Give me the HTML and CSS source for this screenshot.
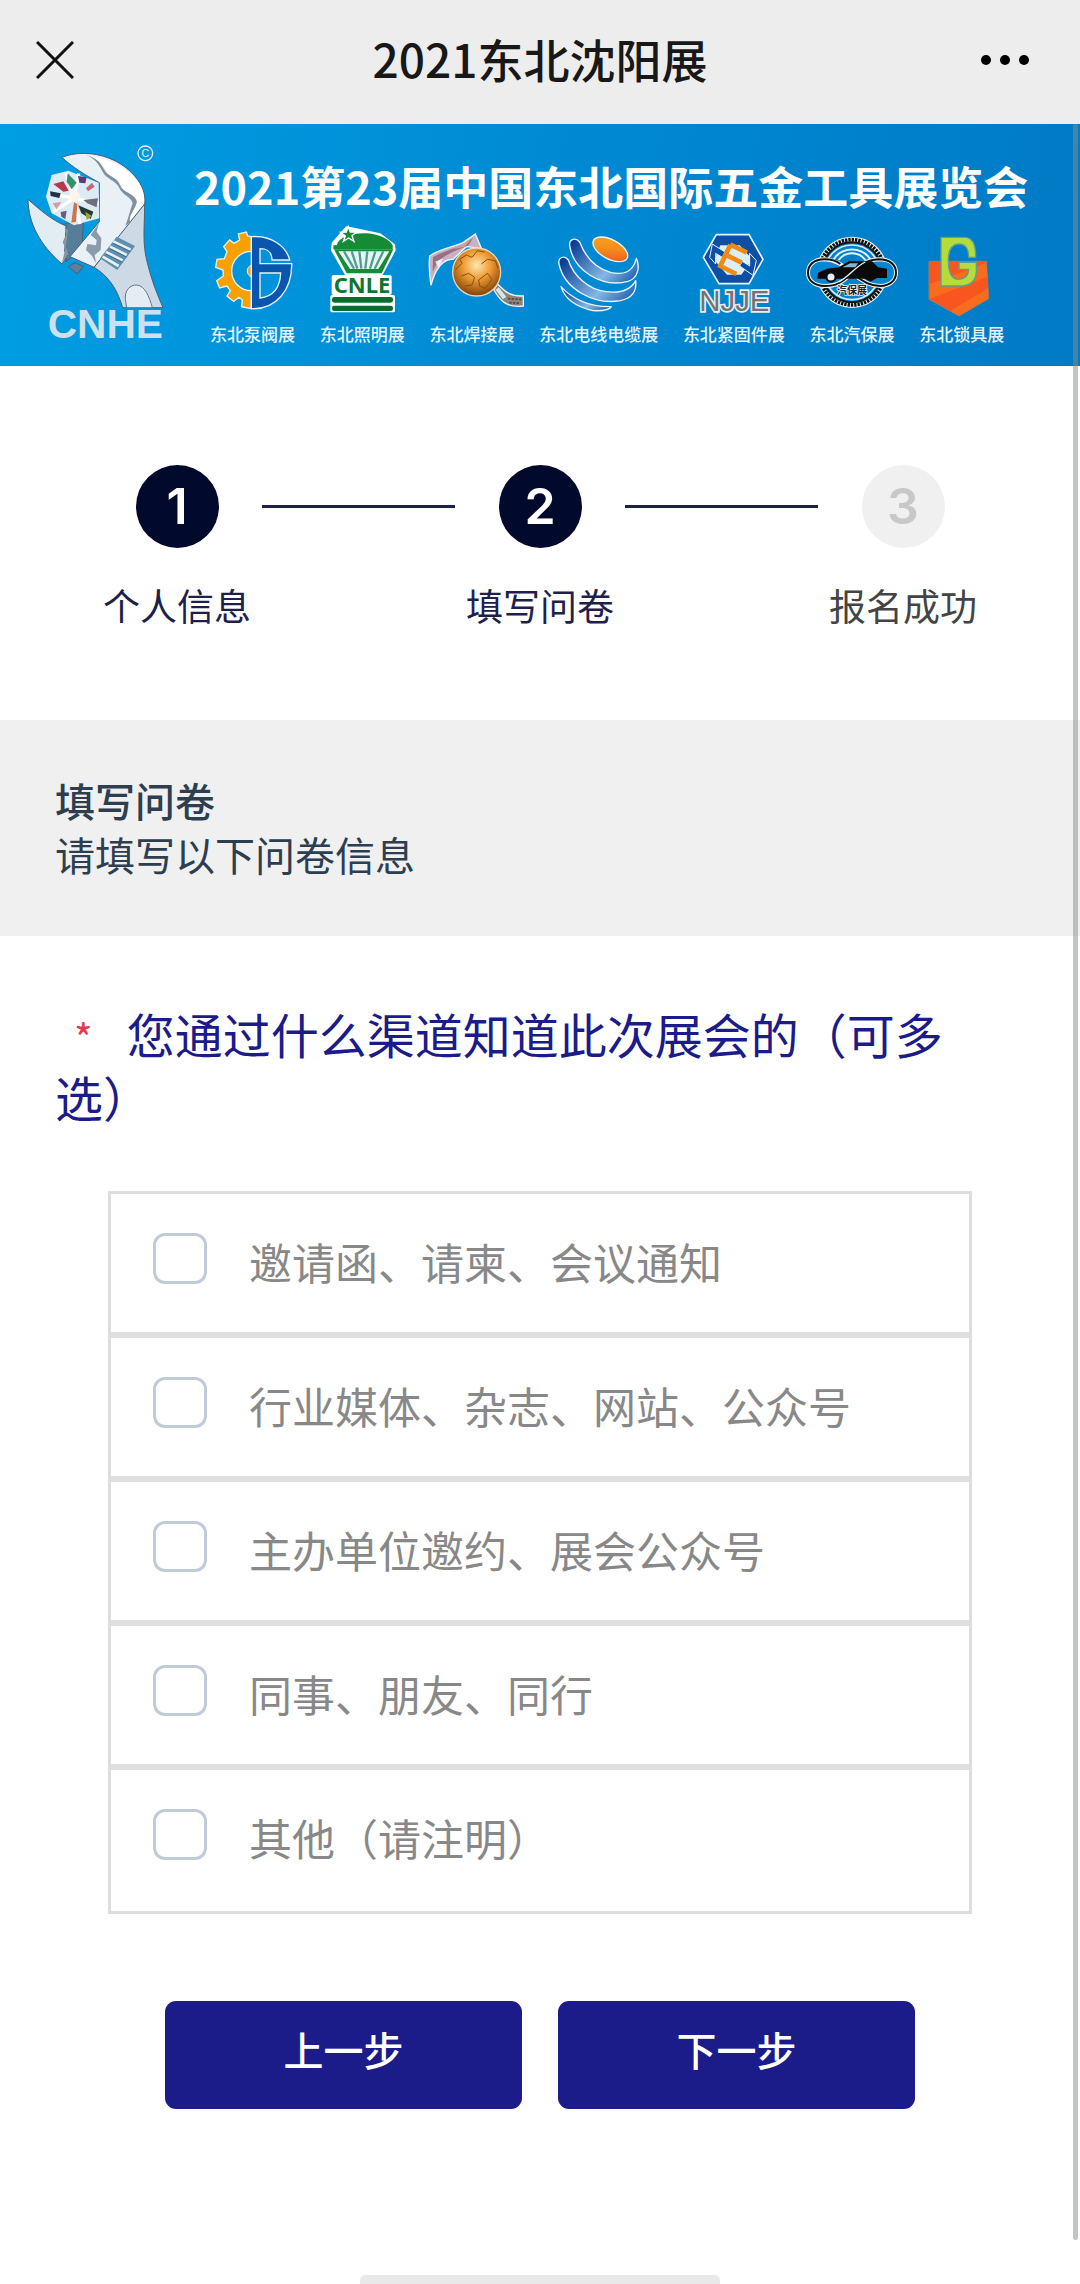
FILE: index.html
```
<!DOCTYPE html>
<html lang="zh-CN">

<head>
    <meta charset="utf-8">
    <meta name="viewport" content="width=device-width, initial-scale=1.0">
    <title>2021东北沈阳展</title>
    <link rel="stylesheet" href="styles.css">
</head>

<body>
    <header class="nav_bar">
        <button type="button" class="nav_btn nav_close" aria-label="关闭">
            <svg width="38" height="38" viewBox="0 0 38 38">
                <path d="M1 1L37 37M37 1L1 37" stroke="#111" stroke-width="3" fill="none" />
            </svg>
        </button>
        <div class="nav_title">2021东北沈阳展</div>
        <button type="button" class="nav_btn" aria-label="更多">
            <svg width="50" height="12" viewBox="0 0 50 12">
                <circle cx="6" cy="6" r="5" />
                <circle cx="25" cy="6" r="5" />
                <circle cx="44" cy="6" r="5" />
            </svg>
        </button>
    </header>

    <div class="page">
        <div class="banner">
            <!-- CNHE 扳手标志 -->
            <svg class="banner_logo" viewBox="0 12 582 726">
                <g stroke="#44607a" stroke-width="3" stroke-linejoin="round">
                    <path d="M198 310L250 305L246 385L198 425Z" fill="#587d98" />
                    <path d="M205 440L232 462L250 440L225 428Z" fill="#5b7f9c" />
                    <path d="M434 248C434 330 425 370 445 440C458 490 475 530 489 563L368 563C350 500 320 465 282 442Z" fill="#cdd9e5" />
                    <path d="M84 238C85 310 120 375 186 432L208 398L194 395L198 318C155 300 120 270 84 238Z" fill="#e2edf3" />
                    <path d="M194 322L198 345L188 366L196 385L186 430L205 400L198 380L204 330Z" fill="#8296a6" stroke="none" />
                    <path d="M186 112C235 92 300 98 350 125C405 155 440 205 434 252L282 442L210 410L298 305L298 188C255 165 215 140 186 112Z" fill="#e9f1f6" />
                    <path d="M262 105C300 112 345 125 375 150C420 175 437 220 432 250L385 308L390 285L410 250L398 225L368 210L355 180L325 165L305 130Z" fill="#fff" stroke="none" />
                    <path d="M258 104C290 115 300 125 312 148C325 172 350 170 360 195C370 220 405 220 411 245C405 270 385 285 390 306L376 318C390 280 390 272 398 250C395 230 365 225 356 200C345 180 320 178 308 155C296 132 285 115 258 104Z" fill="#7d91a1" stroke="none" />
                    <path d="M297 308L290 335L304 355L302 390L284 405L288 430L276 408L258 390L262 372L288 376L290 360L272 345Z" fill="#8a9cab" stroke="none" />
                </g>
                <path d="M376 538C374 510 390 495 410 495C435 497 448 530 457 563H380Z" fill="#e4edf2" stroke="#60788c" stroke-width="3" />
                <path d="M350 350L405 378L352 450L300 415Z" fill="#5c8fb0" />
                <path d="M340 364L392 389M330 380L380 405M318 396L368 421M308 410L356 438" stroke="#e8f0f5" stroke-width="8" />
                <path d="M340 370L392 395M330 386L380 411M318 402L368 427" stroke="#37566e" stroke-width="2" />
                <path d="M155 165L205 152L296 188L298 295L222 316L155 280L138 230Z" fill="#dcebf4" />
                <path d="M222 235L198 158M222 235L296 250M222 235L160 275M222 235L236 160M222 235L150 220M222 235L240 312" stroke="#fff" stroke-width="10" />
                <path d="M160 192L190 184L206 212L190 215Z" fill="#b5384c" />
                <path d="M150 214L182 220L178 234L152 228Z" fill="#222f44" />
                <path d="M203 160L230 188L215 208L200 185Z" fill="#35916a" />
                <path d="M234 168L260 172L256 190L238 188Z" fill="#5b3c74" />
                <path d="M258 205L276 188L284 200L264 214Z" fill="#c2697c" />
                <path d="M250 240L294 235L290 262L262 250Z" fill="#6c6f7d" />
                <path d="M235 256L280 275L272 297L244 280Z" fill="#283a30" />
                <path d="M256 275L276 288L260 300Z" fill="#9aa53f" />
                <path d="M182 276L200 272L196 298L184 290Z" fill="#6f5a86" />
                <path d="M158 250L184 246L170 268Z" fill="#d79aa6" />
                <path d="M222 246L232 252L228 305L214 308Z" fill="#cb754b" />
                <circle cx="224" cy="228" r="16" fill="#fff4e8" />
                <circle cx="436" cy="100" r="22" fill="none" stroke="#e6f5fd" stroke-width="4" />
                <text class="logo_mark" x="436" y="112" text-anchor="middle">C</text>
                <text class="logo_name" x="316" y="655" text-anchor="middle">CNHE</text>
            </svg>

            <div class="banner_main">
                <h1 class="banner_title">2021第23届中国东北国际五金工具展览会</h1>
                <ul class="show_list">
                    <li>
                        <svg viewBox="36 6 252 288">
                            <path d="M157 50L146 48L142 36L118 42L122 60L105 70L92 60L74 80L84 95L76 116L54 118L50 142L72 150L73 168L53 182L62 204L84 198L94 212L84 228L104 244L120 232L130 240L128 260L157 266V212A58 58 0 0 1 157 94Z" fill="#f7a000" stroke="#e8f4f8" stroke-width="4" />
                            <path d="M157 136A18 18 0 0 0 157 170Z" fill="#f7a000" stroke="#e8f4f8" stroke-width="3" />
                            <path fill-rule="evenodd" d="M157 50C215 45 262 78 272 120H219C218 96 208 86 183 86V131H278C280 210 230 270 157 266ZM183 159H245C243 205 220 230 183 234Z" fill="#0a56ae" stroke="#e8f4f8" stroke-width="4" />
                        </svg>
                        <span>东北泵阀展</span>
                    </li>
                    <li>
                        <svg viewBox="360 6 252 288">
                            <g stroke="#fff" stroke-width="10" stroke-linejoin="round" fill="#fff">
                                <path d="M400 70L440 24L540 45L580 75L582 90L545 160H438L398 90Z" />
                                <path d="M400 170H570V220H400ZM396 230H580V272H396Z" />
                            </g>
                            <path d="M410 76C415 52 455 38 500 40C540 42 570 60 578 76V88H400V76Z" fill="#168a35" />
                            <path d="M445 20L451 36L470 36L456 47L462 64L446 54L430 64L436 48L422 37L439 36Z" fill="#168a35" stroke="#fff" stroke-width="4" />
                            <path d="M402 88H580L545 160H440Z" fill="#168a35" />
                            <path d="M415 94H568L535 147H450Z" fill="#e9f5f0" />
                            <path d="M432 94L462 146M455 94L472 146M478 94L484 146M502 94L496 146M526 94L510 146M550 94L524 146" stroke="#4d9f95" stroke-width="7" />
                            <text class="cnle_text" x="486" y="220" text-anchor="middle">CNLE</text>
                            <rect x="396" y="231" width="183" height="17" rx="7" fill="#0c6b2d" />
                            <rect x="396" y="257" width="183" height="16" rx="7" fill="#0c6b2d" />
                        </svg>
                        <span>东北照明展</span>
                    </li>
                    <li>
                        <svg viewBox="696 6 252 288">
                            <defs>
                                <radialGradient id="globe" cx="0.5" cy="0.36" r="0.65">
                                    <stop offset="0" stop-color="#ffe7b0" />
                                    <stop offset="0.45" stop-color="#ed9b33" />
                                    <stop offset="1" stop-color="#7e3e08" />
                                </radialGradient>
                            </defs>
                            <path d="M695 108C725 85 770 80 795 68L832 42L850 85L805 80L765 118C735 115 710 150 699 196C694 165 693 130 695 108Z" fill="#c5b3c4" stroke="#eef4f6" stroke-width="4" />
                            <path d="M705 112C735 92 775 90 825 54L812 76L765 95C735 110 720 120 704 155Z" fill="#9b6e84" />
                            <path d="M712 125L735 115L722 145Z" fill="#f4e8f5" />
                            <path d="M765 88L818 60L800 80Z" fill="#d8a08d" />
                            <path d="M898 192C915 205 925 230 976 228V258C925 265 905 240 888 210Z" fill="#8e8377" stroke="#eef4f6" stroke-width="4" />
                            <path d="M902 202L925 230L915 238L893 210Z" fill="#d8e6ea" />
                            <path d="M930 236L970 238M934 248L966 250" stroke="#4e4640" stroke-width="5" stroke-dasharray="7 4" />
                            <circle cx="836" cy="156" r="72" fill="url(#globe)" stroke="#ead7b8" stroke-width="4" />
                            <path d="M772 150L792 130L785 118L805 105L822 112L838 92L860 96M850 132L868 118L892 122L900 145M790 168L812 160L830 172L822 195L800 198M842 180L868 160L882 178L862 205L845 198Z" fill="none" stroke="#87500f" stroke-width="3" />
                        </svg>
                        <span>东北焊接展</span>
                    </li>
                    <li>
                        <svg viewBox="102 6 252 288">
                            <defs>
                                <linearGradient id="ring" x1="0" y1="0.2" x2="1" y2="0.8">
                                    <stop offset="0" stop-color="#0d3f93" />
                                    <stop offset="0.65" stop-color="#84b8e5" />
                                    <stop offset="1" stop-color="#2565b5" />
                                </linearGradient>
                                <linearGradient id="core" x1="0" y1="0" x2="1" y2="1">
                                    <stop offset="0" stop-color="#f8ab18" />
                                    <stop offset="0.5" stop-color="#f58a1c" />
                                    <stop offset="1" stop-color="#ef4a24" />
                                </linearGradient>
                            </defs>
                            <g stroke="#eaf5fa" stroke-width="4" stroke-linejoin="round" fill="url(#ring)">
                                <path d="M140 76C138 58 158 50 170 66C185 105 215 145 265 158C305 166 330 155 340 115C352 140 345 175 315 184C235 205 150 150 140 76Z" />
                                <path d="M108 132C104 112 125 104 136 120C150 165 195 210 250 215C290 220 322 212 338 182C342 215 325 235 292 242C215 255 125 210 108 132Z" />
                                <path d="M114 200C145 235 200 262 265 260C260 270 235 273 210 272C155 260 125 235 114 200Z" />
                            </g>
                            <ellipse cx="262" cy="88" rx="57" ry="29" transform="rotate(28 262 88)" fill="url(#core)" stroke="#eaf5fa" stroke-width="4" />
                        </svg>
                        <span>东北电线电缆展</span>
                    </li>
                    <li>
                        <svg viewBox="507 6 252 288">
                            <path d="M580 44H678L720 118L678 191H588L541 112Z" fill="#0c4fa5" stroke="#eaf5fa" stroke-width="5" />
                            <path d="M592 76H650L688 118L655 164H612L574 120Z" fill="#dceef8" />
                            <path d="M568 72L606 96L598 112L578 100V132L560 112ZM690 166L650 138L658 124L680 138V100L700 122Z" fill="#0c4fa5" stroke="#eaf5fa" stroke-width="3" />
                            <path d="M622 74L672 98M622 74L592 138L640 162M612 106L656 128" fill="none" stroke="#f08a10" stroke-width="14" />
                            <text class="njje_text" x="634" y="272" text-anchor="middle">NJJE</text>
                        </svg>
                        <span>东北紧固件展</span>
                    </li>
                    <li>
                        <svg viewBox="84 6 252 288">
                            <circle cx="210" cy="157" r="99" fill="none" stroke="#e8f2f5" stroke-width="16" />
                            <circle cx="210" cy="157" r="98" fill="none" stroke="#111" stroke-width="11" stroke-dasharray="7 3" />
                            <circle cx="210" cy="157" r="90" fill="none" stroke="#111" stroke-width="6" />
                            <circle cx="210" cy="157" r="82" fill="none" stroke="#dce9ee" stroke-width="5" />
                            <path d="M155 118A66 66 0 0 1 265 118M170 120A50 50 0 0 1 250 120" fill="none" stroke="#e8f2f5" stroke-width="6" />
                            <path d="M210 158C180 190 160 198 128 198C95 197 78 180 78 158C78 135 95 118 128 118C165 120 190 140 210 158C245 190 270 198 295 198C325 197 342 180 342 158C342 135 325 118 290 118C250 120 235 135 210 158Z" fill="#0787d1" stroke="#f4f8f9" stroke-width="12" />
                            <path d="M106 176L108 158L135 146L170 142L200 124H270L288 142L315 146V174H285L265 185L250 176H165L148 186L130 176Z" fill="#0a0a0a" />
                            <path d="M182 142L204 130H228L220 142Z" fill="#7fb6d8" />
                            <path d="M210 158C180 190 160 198 128 198C95 197 78 180 78 158C78 135 95 118 128 118C150 118 165 124 175 132M210 158C245 190 270 198 295 198C325 197 342 180 342 158C342 135 325 118 290 118C250 120 235 135 210 158Z" fill="none" stroke="#111" stroke-width="6" />
                            <path d="M170 186C200 170 220 140 250 126" fill="none" stroke="#e8f2f5" stroke-width="4" />
                            <circle cx="147" cy="171" r="14" fill="#e8f2f5" stroke="#0a0a0a" stroke-width="7" />
                            <text class="car_text" x="210" y="221" text-anchor="middle">汽保展</text>
                        </svg>
                        <span>东北汽保展</span>
                    </li>
                    <li>
                        <svg viewBox="423 6 252 288">
                            <path d="M450 124H622L629 236L540 288L450 238Z" fill="#f9561f" stroke="#a77a5c" stroke-width="3" />
                            <path d="M453 192L622 128L625 170L453 236ZM515 272L627 205V236L540 287Z" fill="#f97a1d" opacity="0.6" />
                            <path d="M486 52H560C580 55 590 70 590 112H569C568 84 560 72 538 72C516 74 508 92 508 120C508 155 516 178 538 178C560 178 568 168 569 148H540V127H592V155C590 185 575 198 545 198H486Z" fill="#b5dc3a" stroke="#5a9f98" stroke-width="4" />
                        </svg>
                        <span>东北锁具展</span>
                    </li>
                </ul>
            </div>
        </div>

        <!-- 步骤条 -->
        <div class="steps">
            <div class="step done">
                <div class="step_num">1</div>
                <div class="step_name">个人信息</div>
            </div>
            <div class="step_line"></div>
            <div class="step done">
                <div class="step_num">2</div>
                <div class="step_name">填写问卷</div>
            </div>
            <div class="step_line"></div>
            <div class="step">
                <div class="step_num">3</div>
                <div class="step_name">报名成功</div>
            </div>
        </div>

        <div class="section_head">
            <h2>填写问卷</h2>
            <p>请填写以下问卷信息</p>
        </div>

        <form id="survey_form">
            <fieldset class="question">
                <legend><span class="required">*</span>您通过什么渠道知道此次展会的（可多选）</legend>
                <div class="options">
                    <div class="option">
                        <input type="checkbox" id="channel_1" name="channel" value="1">
                        <label for="channel_1">邀请函、请柬、会议通知</label>
                    </div>
                    <div class="option">
                        <input type="checkbox" id="channel_2" name="channel" value="2">
                        <label for="channel_2">行业媒体、杂志、网站、公众号</label>
                    </div>
                    <div class="option">
                        <input type="checkbox" id="channel_3" name="channel" value="3">
                        <label for="channel_3">主办单位邀约、展会公众号</label>
                    </div>
                    <div class="option">
                        <input type="checkbox" id="channel_4" name="channel" value="4">
                        <label for="channel_4">同事、朋友、同行</label>
                    </div>
                    <div class="option">
                        <input type="checkbox" id="channel_5" name="channel" value="5">
                        <label for="channel_5">其他（请注明）</label>
                    </div>
                </div>
            </fieldset>
            <div class="button-container">
                <button type="button">上一步</button>
                <button type="submit">下一步</button>
            </div>
        </form>

        <div class="scroll_thumb"></div>
    </div>

    <footer class="home_bar">
        <div class="home_indicator"></div>
    </footer>
</body>

</html>
```
FILE: styles.css
```
* {
    box-sizing: border-box;
}

body {
    margin: 0;
    min-height: 100vh;
    display: flex;
    flex-direction: column;
    background-color: #fff;
    font-family: "Noto Sans CJK SC", "Noto Sans", sans-serif;
}

h1,
h2,
p,
ul {
    margin: 0;
    padding: 0;
}

/* 顶部导航 */
.nav_bar {
    display: flex;
    justify-content: space-between;
    align-items: center;
    height: 124px;
    padding: 0 30px 4px;
    background-color: #ededed;
}

.nav_btn {
    display: flex;
    align-items: center;
    justify-content: center;
    width: 90px;
    height: 50px;
    padding: 0;
    border: none;
    background: none;
    cursor: pointer;
}

.nav_close {
    justify-content: flex-start;
    padding-left: 6px;
}

.nav_title {
    padding-bottom: 4px;
    font-size: 46px;
    font-weight: 500;
    line-height: 60px;
    color: #181818;
}

.page {
    position: relative;
    flex: 1;
}

/* 横幅 */
.banner {
    display: flex;
    height: 242px;
    padding-right: 56px;
    background: linear-gradient(100deg, #009ee3, #008ad4 50%, #007ac5);
    color: #fff;
}

.banner_logo {
    flex: 0 0 194px;
    height: 242px;
}

.logo_mark {
    font: 32px "Liberation Sans", sans-serif;
    fill: #e6f5fd;
}

.logo_name {
    font: bold 122px "Liberation Sans", sans-serif;
    fill: #cfdfec;
}

.banner_main {
    flex: 1;
    padding-top: 32px;
}

.banner_title {
    font-size: 45px;
    line-height: 60px;
    font-weight: bold;
    white-space: nowrap;
}

.show_list {
    display: flex;
    justify-content: space-between;
    padding: 6px 24px 0 16px;
    list-style: none;
}

.show_list li {
    display: flex;
    flex-direction: column;
    align-items: center;
    gap: 4px;
    font-size: 17px;
    line-height: 24px;
    font-weight: 500;
    white-space: nowrap;
    color: #e3f5ff;
}

.show_list svg {
    width: 84px;
    height: 96px;
    overflow: visible;
}

.cnle_text {
    font: bold 66px "Noto Sans", sans-serif;
    fill: #12752f;
}

.njje_text {
    font: 88px "Liberation Sans", sans-serif;
    fill: #77706f;
    stroke: #e6eef2;
    stroke-width: 10px;
    paint-order: stroke;
}

.car_text {
    font: bold 30px "Noto Sans CJK SC", sans-serif;
    fill: #222;
    stroke: #e8f2f5;
    stroke-width: 5px;
    paint-order: stroke;
}

/* 步骤条 */
.steps {
    display: flex;
    align-items: flex-start;
    height: 354px;
    padding: 99px 102px 0;
}

.step {
    display: flex;
    flex-direction: column;
    align-items: center;
    gap: 32px;
    width: 150px;
    color: #444;
}

.step_num {
    width: 83px;
    height: 83px;
    border-radius: 50%;
    background-color: #f0f0f0;
    color: #c8c8c8;
    font-family: Inter, sans-serif;
    font-size: 50px;
    font-weight: 600;
    line-height: 83px;
    text-align: center;
}

.step_name {
    font-size: 37px;
    line-height: 50px;
    white-space: nowrap;
}

.step.done {
    color: #1d2149;
}

.step.done .step_num {
    background-color: #010a2c;
    color: #fff;
}

.step_line {
    flex: 1;
    height: 3px;
    margin: 40px 10px 0;
    background-color: #1d2149;
}

.section_head {
    padding: 53px 55px 55px;
    background-color: #f0f0f0;
    color: #2c3e50;
    font-size: 40px;
    line-height: 54px;
}

.section_head h2 {
    font-size: 40px;
    font-weight: 500;
}

/* 问卷 */
.question {
    margin: 0;
    padding: 66px 55px 0;
    border: none;
}

.question legend {
    float: left;
    width: 100%;
    margin-bottom: 63px;
    padding: 0;
    font-size: 48px;
    line-height: 63px;
    color: #1b1b8a;
    text-spacing-trim: space-all;
    word-break: break-all;
}

.required {
    margin: 0 34px 0 19px;
    font-size: 40px;
    line-height: 40px;
    color: #e8344e;
}

.options {
    clear: both;
    margin: 0 53px;
    border: 3px solid #ddd;
}

.option {
    display: flex;
    align-items: flex-start;
    gap: 42px;
    padding: 39px 42px 42px;
    border-bottom: 6px solid #dfdfdf;
}

.option:last-child {
    padding-bottom: 45px;
    border-bottom: none;
}

.option input {
    appearance: none;
    flex: none;
    width: 54px;
    height: 51px;
    margin: 0;
    border: 3px solid #c0cbda;
    border-radius: 12px;
    background-color: #fff;
}

.option input:checked {
    background-color: #1b1b8a;
}

.option label {
    font-size: 43px;
    line-height: 57px;
    color: #888;
}

.button-container {
    display: flex;
    justify-content: center;
    gap: 36px;
    padding: 87px 165px;
}

.button-container button {
    flex: 1;
    height: 108px;
    padding: 0 0 12px;
    border: none;
    border-radius: 11px;
    background-color: #1b1b8a;
    color: #fff;
    font-family: inherit;
    font-size: 40px;
    font-weight: 500;
    cursor: pointer;
}

.scroll_thumb {
    position: absolute;
    top: 0;
    right: 2px;
    bottom: 0;
    width: 5px;
    border-radius: 3px;
    background-color: rgba(134, 140, 140, 0.5);
}

.home_bar {
    padding-top: 35px;
}

.home_indicator {
    width: calc(100% / 3);
    height: 9px;
    margin: 0 auto;
    border-radius: 5px 5px 0 0;
    background-color: #e9e9e9;
}
```
